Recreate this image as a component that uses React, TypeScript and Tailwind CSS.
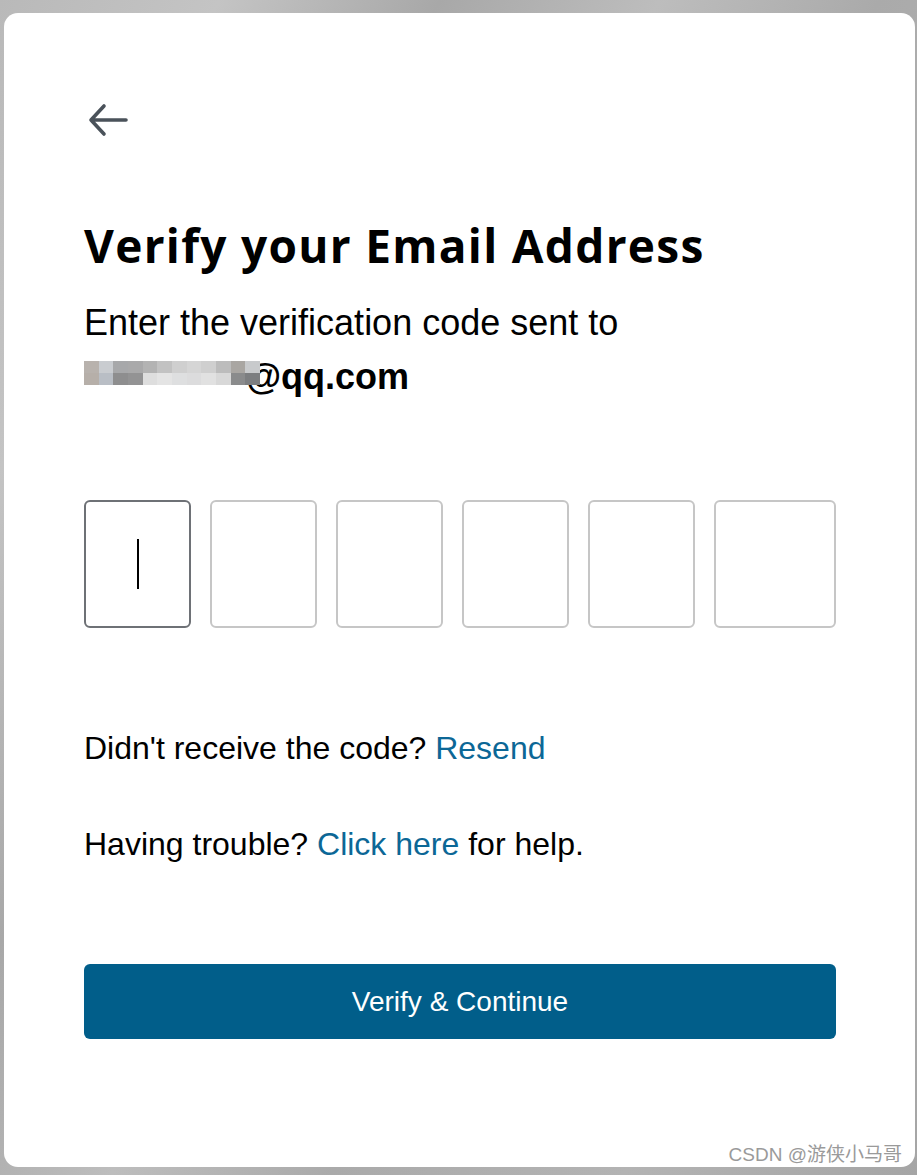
import React from "react";

const blurCells = [
  ["#b8b2ad", "#c9ccd0", "#a7a8aa", "#a9a9aa", "#b3b3b3", "#c2c2c2", "#cfcfcf", "#d5d5d5", "#cfcfcf", "#bcbcbc", "#a9a6a2", "#c8cacc"],
  ["#b6afa9", "#b9bec5", "#8e8e8f", "#939394", "#dedede", "#e4e4e4", "#dedfe0", "#dcdcdd", "#e1e1e1", "#d8d8d8", "#8a8b8c", "#7c7e80"],
];

export default function App() {
  return (
    <div
      className="w-[917px] h-[1175px] relative overflow-hidden"
      style={{
        background:
          "linear-gradient(115deg,#b9b9b9 0%,#c4c4c4 15%,#a8a8a8 30%,#bdbdbd 45%,#aaaaaa 60%,#b3b3b3 80%,#a5a5a5 100%)",
      }}
    >
      <div className="absolute left-[4px] top-[13px] w-[911px] h-[1154px] bg-white rounded-[14px] pl-[80px] pr-[79px] pt-[87px]">
        <svg width="48" height="40" viewBox="0 0 48 40" className="block">
          <path
            d="M42 20H7M20 6L7 20L20 34"
            fill="none"
            stroke="#4a525a"
            strokeWidth="3.6"
            strokeLinecap="round"
            strokeLinejoin="round"
          />
        </svg>
        <h1
          className="mt-[79px] text-[46px] leading-[52px] font-bold text-black tracking-[1.3px]"
          style={{ fontFamily: "'Open Sans', Lato, sans-serif" }}
        >
          Verify your Email Address
        </h1>
        <div
          className="mt-[25px] text-[36px] leading-[54px] text-black"
          style={{ fontFamily: "'Liberation Sans', Arial, sans-serif" }}
        >
          <div>Enter the verification code sent to</div>
          <div className="flex items-center font-bold">
            <div className="flex flex-col w-[176px] h-[24px] -mr-[14px] mt-[-8px] relative z-10">
              {blurCells.map((row, i) => (
                <div key={i} className="flex h-[12px]">
                  {row.map((c, j) => (
                    <div key={j} className="flex-1" style={{ background: c }} />
                  ))}
                </div>
              ))}
            </div>
            <span>@qq.com</span>
          </div>
        </div>

        <div className="mt-[96px] flex gap-[19px]">
          <div className="w-[107px] h-[128px] rounded-[6px] border-[2px] border-[#6e7176] flex items-center justify-center">
            <div className="w-[2px] h-[50px] bg-black" />
          </div>
          {[0, 1, 2, 3].map((i) => (
            <div key={i} className="w-[107px] h-[128px] rounded-[6px] border-[2px] border-[#c6c6c6]" />
          ))}
          <div className="flex-1 h-[128px] rounded-[6px] border-[2px] border-[#c6c6c6]" />
        </div>

        <div
          className="text-[32px] text-black"
          style={{ fontFamily: "'Liberation Sans', Arial, sans-serif" }}
        >
          <p className="mt-[100px] leading-[40px]">
            Didn't receive the code? <span className="text-[#0c6796]">Resend</span>
          </p>
          <p className="mt-[56px] leading-[40px]">
            Having trouble? <span className="text-[#0c6796]">Click here</span> for help.
          </p>
        </div>

        <button
          className="mt-[100px] w-full h-[75px] rounded-[6px] bg-[#015e8a] text-white text-[28px] flex items-center justify-center"
          style={{ fontFamily: "'Liberation Sans', Arial, sans-serif" }}
        >
          Verify &amp; Continue
        </button>
      </div>

      <div
        className="absolute right-[15px] bottom-[6px] text-[19px] text-[#9a9a9a]"
        style={{
          fontFamily: "'Liberation Sans', 'Noto Sans CJK SC', sans-serif",
          textShadow: "0 0 2px #fff, 0 0 2px #fff",
        }}
      >
        CSDN @游侠小马哥
      </div>
    </div>
  );
}
